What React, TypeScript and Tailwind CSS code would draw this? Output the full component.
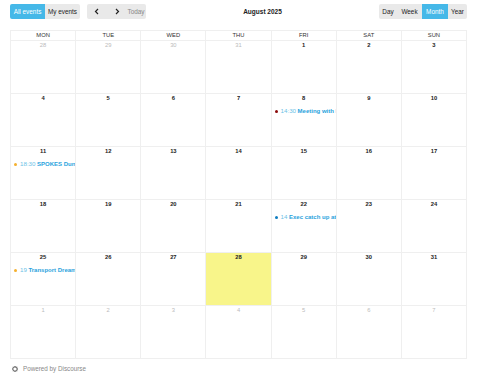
import React from "react";

type Ev = { dot: string; time: string; title: string };

const events: Record<string, Ev> = {
  "8": { dot: "#8b0a0a", time: "14:30", title: "Meeting with Elected Members" },
  "11": { dot: "#f5b02e", time: "18:30", title: "SPOKES Dunedin" },
  "22": { dot: "#0d7cc0", time: "14", title: "Exec catch up at cafe" },
  "25": { dot: "#f5b02e", time: "19", title: "Transport Dreams" },
};

function buildDays() {
  const days: { n: number; cur: boolean; key: string }[] = [];
  [28, 29, 30, 31].forEach((n) => days.push({ n, cur: false, key: "p" + n }));
  for (let i = 1; i <= 31; i++) days.push({ n: i, cur: true, key: String(i) });
  for (let i = 1; i <= 7; i++) days.push({ n: i, cur: false, key: "n" + i });
  return days;
}

export default function App() {
  const days = buildDays();
  const heads = ["MON", "TUE", "WED", "THU", "FRI", "SAT", "SUN"];
  const font = { fontFamily: '"Liberation Sans", Arial, sans-serif' };
  return (
    <div className="w-[477px] h-[375px] bg-white px-[10px] pt-[4px] text-[#222]" style={font}>
      <div className="relative flex items-center justify-between h-[15px]">
        <div className="flex items-center gap-[7px]">
          <div className="flex h-[15px] text-[6.4px] rounded-[2px] overflow-hidden">
            <div className="w-[35px] flex items-center justify-center bg-[#45b8e8] text-white">All events</div>
            <div className="w-[35px] flex items-center justify-center bg-[#e9e9e9] text-[#222]">My events</div>
          </div>
          <div className="flex h-[15px] text-[6.4px] rounded-[2px] overflow-hidden bg-[#e9e9e9]">
            <div className="w-[20px] flex items-center justify-center">
              <svg width="6" height="7" viewBox="0 0 6 7"><path d="M4 1 L1.5 3.5 L4 6" fill="none" stroke="#222" strokeWidth="1.2" /></svg>
            </div>
            <div className="w-[19px] flex items-center justify-center">
              <svg width="6" height="7" viewBox="0 0 6 7"><path d="M2 1 L4.5 3.5 L2 6" fill="none" stroke="#222" strokeWidth="1.2" /></svg>
            </div>
            <div className="w-[20px] flex items-center justify-center text-[#888]">Today</div>
          </div>
        </div>
        <div className="absolute left-0 right-0 top-0 h-[15px] flex items-center justify-center pointer-events-none">
          <span className="text-[6.5px] font-bold ml-[48px]">August 2025</span>
        </div>
        <div className="flex h-[15px] text-[6.4px] rounded-[2px] overflow-hidden bg-[#e9e9e9]">
          <div className="w-[18px] flex items-center justify-center">Day</div>
          <div className="w-[25px] flex items-center justify-center">Week</div>
          <div className="w-[26px] flex items-center justify-center bg-[#45b8e8] text-white">Month</div>
          <div className="w-[19px] flex items-center justify-center">Year</div>
        </div>
      </div>

      <div className="mt-[11px] w-[457px] grid grid-cols-7 grid-rows-[10px_repeat(6,53px)] border-l border-t border-[#efefef]">
        {heads.map((h) => (
          <div key={h} className="border-r border-b border-[#efefef] flex items-center justify-center text-[5.8px] text-[#333]">
            {h}
          </div>
        ))}
        {days.map((d) => {
          const ev = d.cur ? events[d.key] : undefined;
          const today = d.cur && d.n === 28;
          return (
            <div
              key={d.key}
              className={`border-r border-b border-[#efefef] overflow-hidden pt-[1px] ${today ? "bg-[#f8f58a]" : ""}`}
            >
              <div className={`text-center leading-[7px] text-[5.8px] ${d.cur ? "text-[#222] font-semibold" : "text-[#bbb]"}`}>
                {d.n}
              </div>
              {ev && (
                <div className="mt-[5px] flex items-center h-[8px] pl-[3px] whitespace-nowrap text-[6px] overflow-hidden">
                  <span className="inline-block w-[3px] h-[3px] rounded-full shrink-0" style={{ background: ev.dot }} />
                  <span className="ml-[3px] text-[#6cbfe6] text-[6.2px]">{ev.time}</span>
                  <span className="ml-[1.5px] font-bold text-[#2aa3dd]">{ev.title}</span>
                </div>
              )}
            </div>
          );
        })}
      </div>

      <div className="mt-[5px] flex items-center h-[10px] pl-[2px] text-[6.3px] text-[#888]">
        <svg width="6" height="6" viewBox="0 0 10 10" className="mr-[5px]">
          <circle cx="5" cy="5" r="3.6" fill="none" stroke="#777" strokeWidth="1.8" />
          <g stroke="#777" strokeWidth="1.6">
            <line x1="5" y1="0" x2="5" y2="2" />
            <line x1="5" y1="8" x2="5" y2="10" />
            <line x1="0" y1="5" x2="2" y2="5" />
            <line x1="8" y1="5" x2="10" y2="5" />
            <line x1="1.5" y1="1.5" x2="2.8" y2="2.8" />
            <line x1="7.2" y1="7.2" x2="8.5" y2="8.5" />
            <line x1="1.5" y1="8.5" x2="2.8" y2="7.2" />
            <line x1="7.2" y1="2.8" x2="8.5" y2="1.5" />
          </g>
        </svg>
        Powered by Discourse
      </div>
    </div>
  );
}
